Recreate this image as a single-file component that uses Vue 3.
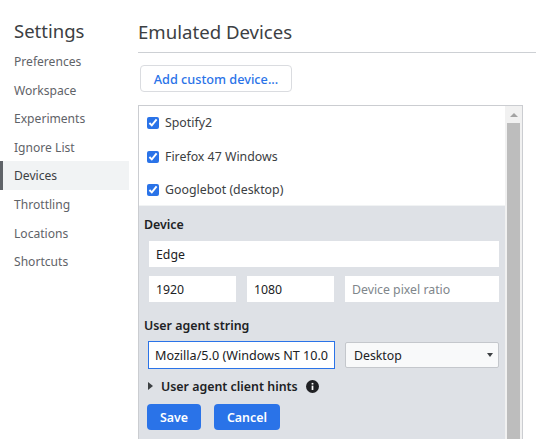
<template>
  <div class="settings">
    <aside class="sidebar">
      <h1 class="title">Settings</h1>
      <ul class="tabs">
        <li v-for="tab in tabs" :key="tab" class="tab" :class="{ active: tab === 'Devices' }">{{ tab }}</li>
      </ul>
    </aside>

    <main class="content">
      <h2 class="heading">Emulated Devices</h2>
      <button class="add-btn">Add custom device...</button>

      <div class="list-box">
        <div class="list-inner">
          <label v-for="device in devices" :key="device" class="row">
            <input type="checkbox" checked />
            <span>{{ device }}</span>
          </label>

          <div class="editor">
            <div class="label">Device</div>
            <input class="field name-field" value="Edge" />
            <div class="size-row">
              <input class="field small" value="1920" />
              <input class="field small" value="1080" />
              <input class="field ratio" placeholder="Device pixel ratio" />
            </div>

            <div class="label ua-label">User agent string</div>
            <div class="ua-row">
              <input class="field ua-field" value="Mozilla/5.0 (Windows NT 10.0; Win64; x64)" />
              <div class="select">
                <span>Desktop</span>
                <i class="select-arrow"></i>
              </div>
            </div>

            <div class="hints">
              <i class="hints-arrow"></i>
              <span>User agent client hints</span>
              <svg class="info" viewBox="0 0 12 12" width="13" height="13">
                <circle cx="6" cy="6" r="6" fill="#202124" />
                <rect x="5.2" y="5.2" width="1.6" height="4" fill="#fff" />
                <rect x="5.2" y="2.7" width="1.6" height="1.5" fill="#fff" />
              </svg>
            </div>

            <div class="actions">
              <button class="primary save">Save</button>
              <button class="primary cancel">Cancel</button>
            </div>
          </div>
        </div>

        <div class="scrollbar">
          <div class="scroll-up"><i></i></div>
          <div class="thumb"></div>
        </div>
      </div>
    </main>
  </div>
</template>

<script setup>
const tabs = ['Preferences', 'Workspace', 'Experiments', 'Ignore List', 'Devices', 'Throttling', 'Locations', 'Shortcuts']
const devices = ['Spotify2', 'Firefox 47 Windows', 'Googlebot (desktop)']
</script>

<style>
html, body {
  margin: 0;
  overflow: hidden;
  background: #fff;
}
</style>

<style scoped>
.settings {
  display: flex;
  height: 439px;
  overflow: hidden;
  font-family: "Noto Sans", "Open Sans", sans-serif;
  color: #202124;
  font-size: 12px;
}

.sidebar {
  width: 129px;
  margin-right: 9px;
  flex-shrink: 0;
}

.title {
  margin: 18px 0 0 14px;
  height: 29px;
  line-height: 25px;
  font-size: 18.5px;
  font-weight: 400;
  color: #3c4043;
}

.tabs {
  list-style: none;
  margin: 0;
  padding: 0;
}

.tab {
  height: 28.6px;
  line-height: 29px;
  padding-left: 14px;
  font-size: 12.1px;
  color: #5f6368;
}

.tab.active {
  background: #f1f3f4;
  color: #3c4043;
  box-shadow: inset 3px 0 0 #5f6368;
}

.content {
  flex: 1;
  min-width: 0;
}

.heading {
  margin: 0;
  height: 52px;
  line-height: 64px;
  font-size: 18.6px;
  font-weight: 400;
  color: #3c4043;
  border-bottom: 1px solid #cdd0d4;
}

.add-btn {
  display: block;
  margin: 12px 0 0 2px;
  width: 152px;
  height: 27px;
  padding: 0;
  background: #fff;
  border: 1px solid #dadce0;
  border-radius: 4px;
  color: #2a73e8;
  font: 500 12.7px "Noto Sans", "Open Sans", sans-serif;
}

.list-box {
  display: flex;
  margin-top: 13px;
  width: 383px;
  height: 340px;
  border: 1px solid #cbcdd1;
  border-bottom: 0;
}

.list-inner {
  flex: 1;
  min-width: 0;
}

.row {
  display: flex;
  align-items: center;
  height: 33px;
  padding: 0 0 0 8px;
  box-sizing: border-box;
  font-size: 12.35px;
  color: #3c4043;
}

.row + .row {
  padding-top: 2px;
}

.row input {
  width: 12px;
  height: 12px;
  margin: 0 6px 0 0;
  accent-color: #2a73e8;
  flex-shrink: 0;
}

.editor {
  height: 240px;
  background: #dee1e6;
  border-top: 1px solid #f1f3f4;
  padding: 11px 5px 0;
}

.label {
  font-weight: 600;
  font-size: 12.4px;
  line-height: 16px;
  color: #202124;
}

.field {
  box-sizing: border-box;
  height: 26px;
  border: 0;
  outline: 0;
  padding: 0 7px;
  background: #fff;
  color: #202124;
  font: 12.3px "Noto Sans", "Open Sans", sans-serif;
}

.field::placeholder {
  color: #80868b;
}

.name-field {
  display: block;
  width: 350px;
  margin: 8px 0 0 5px;
}

.size-row {
  display: flex;
  gap: 11px;
  margin: 9px 0 0 5px;
}

.small {
  width: 87px;
}

.ratio {
  width: 154px;
}

.ua-label {
  margin-top: 16px;
}

.ua-row {
  display: flex;
  align-items: center;
  margin: 7px 0 0 4px;
}

.ua-field {
  width: 187px;
  height: 28px;
  padding: 0 6px;
  border: 1px solid #2a73e8;
  margin-right: 10px;
  font-size: 12.6px;
}

.select {
  box-sizing: border-box;
  display: flex;
  align-items: center;
  justify-content: space-between;
  width: 154px;
  height: 26px;
  padding: 0 5px 0 8px;
  background: #f8f9fa;
  border: 1px solid #c4c7cc;
  border-radius: 2px;
  font-size: 12.3px;
}

.select-arrow {
  width: 0;
  height: 0;
  border-left: 3.5px solid transparent;
  border-right: 3.5px solid transparent;
  border-top: 4px solid #3c4043;
}

.hints {
  display: flex;
  align-items: center;
  height: 18px;
  margin: 8px 0 0 4px;
  font-weight: 600;
  font-size: 12.4px;
}

.hints-arrow {
  width: 0;
  height: 0;
  margin-right: 8px;
  border-top: 4px solid transparent;
  border-bottom: 4px solid transparent;
  border-left: 5px solid #3c4043;
}

.info {
  margin-left: 8px;
}

.actions {
  display: flex;
  gap: 13px;
  margin: 9px 0 0 3px;
}

.primary {
  height: 26px;
  padding: 0;
  border: 0;
  border-radius: 4px;
  background: #2a73e8;
  color: #fff;
  font: 600 12.4px "Noto Sans", "Open Sans", sans-serif;
}

.save {
  width: 54px;
}

.cancel {
  width: 66px;
}

.scrollbar {
  width: 17px;
  flex-shrink: 0;
  background: #f1f1f1;
  display: flex;
  flex-direction: column;
  align-items: center;
}

.scroll-up {
  height: 17px;
  display: flex;
  align-items: center;
  justify-content: center;
}

.scroll-up i {
  width: 0;
  height: 0;
  border-left: 4px solid transparent;
  border-right: 4px solid transparent;
  border-bottom: 4px solid #a3a3a3;
}

.thumb {
  flex: 1;
  width: 13px;
  background: #bdbdbd;
}
</style>
